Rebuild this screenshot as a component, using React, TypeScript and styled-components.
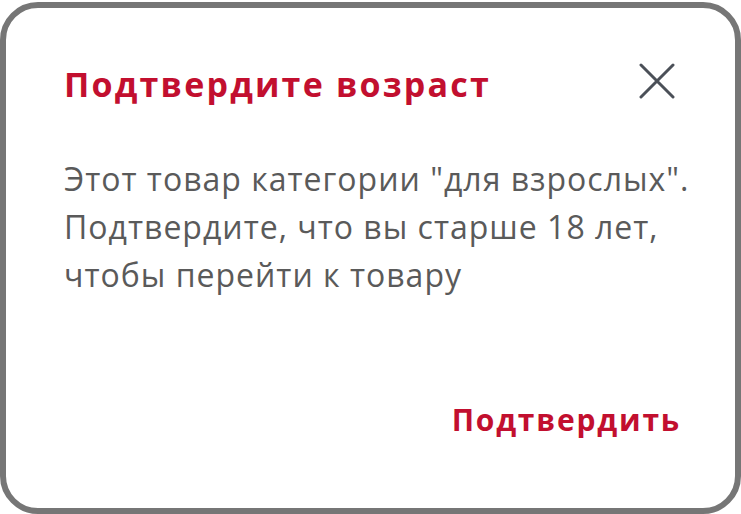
import styled, { createGlobalStyle } from "styled-components";

const GlobalStyle = createGlobalStyle`
  html, body {
    margin: 0;
    padding: 0;
    background: #ffffff;
  }
  body {
    padding-top: 2px;
    font-family: "Open Sans", "Noto Sans", sans-serif;
  }
`;

const Dialog = styled.div`
  box-sizing: border-box;
  width: 741px;
  height: 512px;
  border: 6px solid #767676;
  border-radius: 38px;
  background: #ffffff;
  padding: 56px 58px 0 58px;
  display: flex;
  flex-direction: column;
`;

const Header = styled.div`
  display: flex;
  align-items: center;
  justify-content: space-between;
`;

const Title = styled.h2`
  margin: 0;
  font-size: 34px;
  line-height: 40px;
  font-weight: 700;
  letter-spacing: 2.2px;
  white-space: nowrap;
  color: #c20f2f;
`;

const CloseButton = styled.button`
  border: none;
  background: none;
  padding: 0;
  margin: -6px 0 0 0;
  width: 40px;
  height: 40px;
  display: flex;
  align-items: center;
  justify-content: center;
  cursor: pointer;
`;

const Message = styled.p`
  margin: 51px -20px 0 0;
  font-size: 32px;
  line-height: 48px;
  font-weight: 400;
  letter-spacing: 1px;
  white-space: nowrap;
  color: #5a5a5a;
`;

const Footer = styled.div`
  margin-top: auto;
  padding-bottom: 68px;
  display: flex;
  justify-content: flex-end;
`;

const ConfirmButton = styled.button`
  border: none;
  background: none;
  padding: 0;
  margin-right: -4px;
  font-family: inherit;
  font-size: 30px;
  font-weight: 700;
  letter-spacing: 1.8px;
  color: #c20f2f;
  cursor: pointer;
`;

const CloseIcon = () => (
  <svg width="36" height="36" viewBox="0 0 36 36" fill="none">
    <path d="M2 2L34 34M34 2L2 34" stroke="#4b5058" strokeWidth="3" strokeLinecap="round" />
  </svg>
);

export default function App() {
  return (
    <>
      <GlobalStyle />
      <Dialog>
        <Header>
          <Title>Подтвердите возраст</Title>
          <CloseButton aria-label="Закрыть">
            <CloseIcon />
          </CloseButton>
        </Header>
        <Message>
          Этот товар категории "для взрослых".
          <br />
          Подтвердите, что вы старше 18 лет,
          <br />
          чтобы перейти к товару
        </Message>
        <Footer>
          <ConfirmButton>Подтвердить</ConfirmButton>
        </Footer>
      </Dialog>
    </>
  );
}
